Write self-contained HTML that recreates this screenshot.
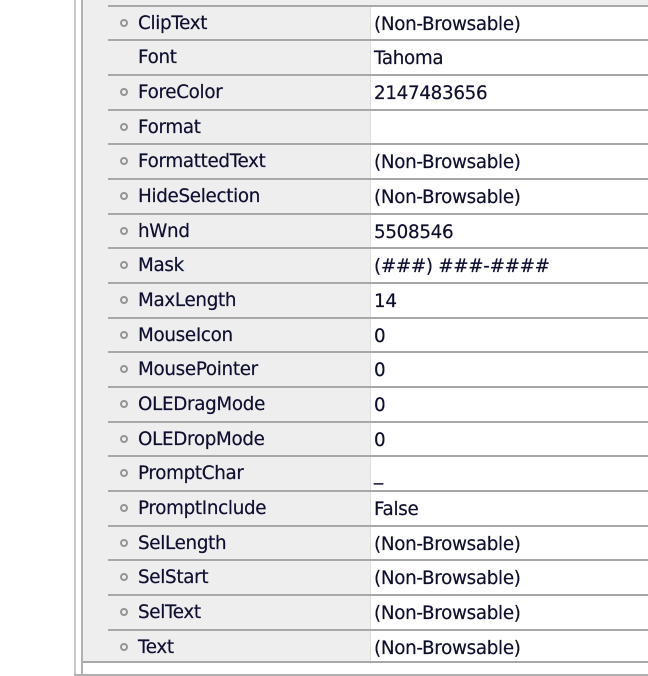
<!DOCTYPE html><html><head><style>
body{margin:0;width:648px;height:676px;background:#fff;position:relative;overflow:hidden;font-family:"DejaVu Sans","Liberation Sans",sans-serif;font-size:18.3px;color:#0e0e30}
.vl{position:absolute;top:0;bottom:0;width:2px;background:#b0b0b0}
#grid{position:absolute;left:83px;top:0;width:565px;height:662px;background:#eeeeee}
.row{position:absolute;left:108px;width:540px;height:34.67px}
.row .ln{position:absolute;left:0;right:0;top:-1px;height:2px;background:#a8a8a8}
.row .n{position:absolute;left:30px;top:1px;line-height:34px;letter-spacing:-0.3px;-webkit-text-stroke:0.2px #0e0e30}
.row .v{position:absolute;left:262px;right:0;top:1px;bottom:0;background:#fff;border-left:1px solid #ddd;padding-left:3px;line-height:35px;letter-spacing:-0.3px;-webkit-text-stroke:0.2px #0e0e30}
.b{position:absolute;left:12px;top:13px;width:4px;height:4px;border:2.5px solid #949494;border-radius:50%}
</style></head><body>
<div class="vl" style="left:74px;background:#c8c8c8"></div>
<div id="grid"></div>
<div class="vl" style="left:81px;height:676px"></div>
<div id="rows"></div>
<div style="position:absolute;left:83px;top:661px;width:565px;height:2px;background:#a8a8a8;z-index:5"></div>
<div style="position:absolute;left:74px;top:674px;width:574px;height:2px;background:#b0b0b0"></div>
<script>
var d=[["ClipText","(Non-Browsable)"],["Font","Tahoma",1],["ForeColor","2147483656"],["Format",""],["FormattedText","(Non-Browsable)"],["HideSelection","(Non-Browsable)"],["hWnd","5508546"],["Mask","(###) ###-####"],["MaxLength","14"],["MouseIcon","0"],["MousePointer","0"],["OLEDragMode","0"],["OLEDropMode","0"],["PromptChar","_"],["PromptInclude","False"],["SelLength","(Non-Browsable)"],["SelStart","(Non-Browsable)"],["SelText","(Non-Browsable)"],["Text","(Non-Browsable)"]];
var h="";d.forEach(function(r,i){var t=5.5+i*34.67;h+='<div class="row" style="top:'+t+'px"><div class="ln"></div>'+(r[2]?'':'<div class="b"></div>')+'<div class="n">'+r[0]+'</div><div class="v">'+r[1]+'</div></div>';});
document.getElementById("rows").innerHTML=h;
</script>
</body></html>
